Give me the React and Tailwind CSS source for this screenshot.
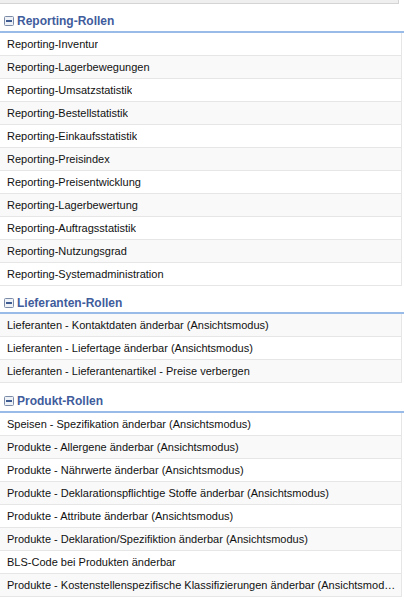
// App.jsx
const sections = [
  {
    title: 'Reporting-Rollen',
    head: 'h-[29px] pt-[7px]',
    items: [
      'Reporting-Inventur',
      'Reporting-Lagerbewegungen',
      'Reporting-Umsatzstatistik',
      'Reporting-Bestellstatistik',
      'Reporting-Einkaufsstatistik',
      'Reporting-Preisindex',
      'Reporting-Preisentwicklung',
      'Reporting-Lagerbewertung',
      'Reporting-Auftragsstatistik',
      'Reporting-Nutzungsgrad',
      'Reporting-Systemadministration',
    ],
  },
  {
    title: 'Lieferanten-Rollen',
    head: 'h-[28px] pt-[8px]',
    items: [
      'Lieferanten - Kontaktdaten änderbar (Ansichtsmodus)',
      'Lieferanten - Liefertage änderbar (Ansichtsmodus)',
      'Lieferanten - Lieferantenartikel - Preise verbergen',
    ],
  },
  {
    title: 'Produkt-Rollen',
    head: 'h-[30px] pt-[8px]',
    items: [
      'Speisen - Spezifikation änderbar (Ansichtsmodus)',
      'Produkte - Allergene änderbar (Ansichtsmodus)',
      'Produkte - Nährwerte änderbar (Ansichtsmodus)',
      'Produkte - Deklarationspflichtige Stoffe änderbar (Ansichtsmodus)',
      'Produkte - Attribute änderbar (Ansichtsmodus)',
      'Produkte - Deklaration/Spezifiktion änderbar (Ansichtsmodus)',
      'BLS-Code bei Produkten änderbar',
      'Produkte - Kostenstellenspezifische Klassifizierungen änderbar (Ansichtsmodus)',
    ],
  },
];

function CollapseIcon() {
  return (
    <svg width="10" height="10" viewBox="0 0 10 10" className="shrink-0">
      <rect x="0.5" y="0.5" width="9" height="9" rx="1" fill="#eef1f6" stroke="#7b8aa6" />
      <rect x="2" y="4" width="6" height="2" fill="#3d5a91" />
    </svg>
  );
}

export default function App() {
  let idx = 0;
  return (
    <div className="w-[404px] h-[605px] bg-white overflow-hidden font-['Liberation_Sans',Arial,sans-serif]">
      <div className="h-[4px] w-[399px] bg-[#efefef] border-b border-r border-[#d4d4d4]" />
      {sections.map((s) => (
        <div key={s.title}>
          <div className={`${s.head} flex items-center gap-[3px] pl-[4px] border-b-2 border-[#99bbe8]`}>
            <CollapseIcon />
            <span className="text-[12px] font-bold text-[#3f5c9c] leading-none">{s.title}</span>
          </div>
          {s.items.map((item) => {
            const odd = idx++ % 2 === 1;
            return (
              <div
                key={item}
                className={`w-[402px] h-[23px] flex items-center pl-[7px] pr-[5px] border-b border-r border-[#e6e6e6] text-[11px] text-[#111] ${odd ? 'bg-[#f9f9f9]' : 'bg-white'}`}
              >
                <span className="truncate">{item}</span>
              </div>
            );
          })}
        </div>
      ))}
    </div>
  );
}
